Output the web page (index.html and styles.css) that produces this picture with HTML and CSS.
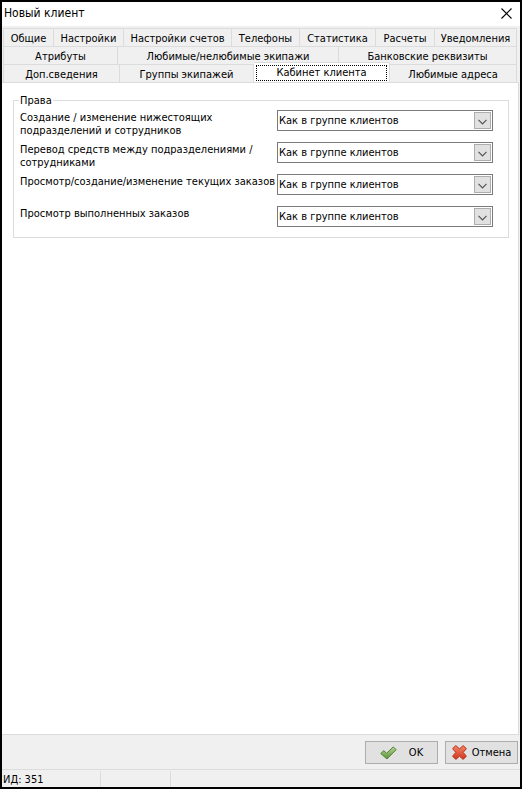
FILE: index.html
```html
<!DOCTYPE html>
<html lang="ru">
<head>
    <meta charset="UTF-8">
    <meta name="viewport" content="width=device-width, initial-scale=1.0">
    <title>Новый клиент</title>
    <link rel="stylesheet" href="styles.css">
</head>
<body>
    <div class="window">
        <header class="titlebar">
            <h1>Новый клиент</h1>
            <button type="button" class="close" aria-label="Закрыть">
                <svg width="11" height="11" viewBox="0 0 11 11"><path d="M.5 .5l10 10M10.5 .5l-10 10" fill="none" stroke="#000" stroke-width="1.1"/></svg>
            </button>
        </header>

        <nav class="tabs" role="tablist">
            <div class="tab-row row-1">
                <button type="button" role="tab">Общие</button>
                <button type="button" role="tab">Настройки</button>
                <button type="button" role="tab">Настройки счетов</button>
                <button type="button" role="tab">Телефоны</button>
                <button type="button" role="tab">Статистика</button>
                <button type="button" role="tab">Расчеты</button>
                <button type="button" role="tab">Уведомления</button>
            </div>
            <div class="tab-row row-2">
                <button type="button" role="tab">Атрибуты</button>
                <button type="button" role="tab">Любимые/нелюбимые экипажи</button>
                <button type="button" role="tab">Банковские реквизиты</button>
            </div>
            <div class="tab-row row-3">
                <button type="button" role="tab">Доп.сведения</button>
                <button type="button" role="tab">Группы экипажей</button>
                <button type="button" role="tab" class="active" aria-selected="true"><span>Кабинет клиента</span></button>
                <button type="button" role="tab">Любимые адреса</button>
            </div>
        </nav>

        <main class="page">
            <fieldset class="rights">
                <legend>Права</legend>
                <div class="field">
                    <label for="subdivisions">Создание / изменение нижестоящих подразделений и сотрудников</label>
                    <div class="combo">
                        <select id="subdivisions"><option>Как в группе клиентов</option></select>
                        <span class="arrow"><svg width="9" height="6" viewBox="0 0 9 6"><path d="M.5 .8l4 4 4-4" fill="none" stroke="#555" stroke-width="1.2"/></svg></span>
                    </div>
                </div>
                <div class="field">
                    <label for="transfer">Перевод средств между подразделениями / сотрудниками</label>
                    <div class="combo">
                        <select id="transfer"><option>Как в группе клиентов</option></select>
                        <span class="arrow"><svg width="9" height="6" viewBox="0 0 9 6"><path d="M.5 .8l4 4 4-4" fill="none" stroke="#555" stroke-width="1.2"/></svg></span>
                    </div>
                </div>
                <div class="field">
                    <label for="current">Просмотр/создание/изменение текущих заказов</label>
                    <div class="combo">
                        <select id="current"><option>Как в группе клиентов</option></select>
                        <span class="arrow"><svg width="9" height="6" viewBox="0 0 9 6"><path d="M.5 .8l4 4 4-4" fill="none" stroke="#555" stroke-width="1.2"/></svg></span>
                    </div>
                </div>
                <div class="field">
                    <label for="completed">Просмотр выполненных заказов</label>
                    <div class="combo">
                        <select id="completed"><option>Как в группе клиентов</option></select>
                        <span class="arrow"><svg width="9" height="6" viewBox="0 0 9 6"><path d="M.5 .8l4 4 4-4" fill="none" stroke="#555" stroke-width="1.2"/></svg></span>
                    </div>
                </div>
            </fieldset>
        </main>

        <div class="actions">
            <button type="button" class="btn btn-ok">
                <svg width="17" height="14" viewBox="0 0 17 14">
                    <defs><linearGradient id="green" x1="0" y1="0" x2="0" y2="1"><stop offset="0" stop-color="#b4d694"/><stop offset="1" stop-color="#5a9235"/></linearGradient></defs>
                    <path d="M.8 7.6L3.6 4.6 6.6 7.2 13.2 1 16.2 3.6 7 13z" fill="url(#green)" stroke="#55803a" stroke-width="1" stroke-linejoin="round"/>
                </svg>
                <span>OK</span>
            </button>
            <button type="button" class="btn btn-cancel">
                <svg width="15" height="15" viewBox="0 0 15 15">
                    <defs><linearGradient id="red" x1="0" y1="0" x2="0" y2="1"><stop offset="0" stop-color="#f0876a"/><stop offset="1" stop-color="#d2341a"/></linearGradient></defs>
                    <path d="M3.8 .6L7.5 3.8 11.2 .6 14.4 3.6 11.2 7.4 14.4 11.2 11.2 14.4 7.5 11.2 3.8 14.4 .6 11.2 3.8 7.4 .6 3.6z" fill="url(#red)" stroke="#b5321c" stroke-width="1" stroke-linejoin="round"/>
                </svg>
                <span>Отмена</span>
            </button>
        </div>

        <footer class="statusbar">
            <span>ИД: 351</span>
            <span></span>
            <span></span>
        </footer>
    </div>
</body>
</html>
```
FILE: styles.css
```css
:root {
    --face: #f0f0f0;
    --line: #dcdcdc;
    --button: #e1e1e1;
    --button-border: #adadad;
}

* {
    box-sizing: border-box;
}

body {
    margin: 0;
    font-family: Tahoma, 'DejaVu Sans Condensed', 'DejaVu Sans', sans-serif;
    font-size: 11px;
    line-height: 13px;
    color: #000;
}

button, select {
    font: inherit;
    color: inherit;
    margin: 0;
}

.window {
    display: flex;
    flex-direction: column;
    min-height: 100vh;
    border: 2px solid #000;
    background: var(--face);
}

.titlebar {
    display: flex;
    justify-content: space-between;
    align-items: center;
    height: 24px;
    padding: 0 8px 2px 2px;
    background: #fff;
}

.titlebar h1 {
    margin: 0;
    font-size: 12px;
    font-weight: normal;
}

.close {
    display: flex;
    padding: 0;
    border: none;
    background: none;
}

/* Tabs */
.tabs {
    padding: 2px 3px 0 1px;
}

.tab-row {
    display: grid;
    height: 18px;
    border-left: 1px solid var(--line);
}

.row-1 {
    grid-template-columns: 50fr 70fr 108fr 68fr 76fr 59fr 82fr;
}

.row-2 {
    grid-template-columns: 114fr 221fr 178fr;
}

.row-3 {
    grid-template-columns: 116fr 134fr 136fr 127fr;
}

.tab-row button {
    padding: 1px 0 0;
    border: 1px solid var(--line);
    border-width: 1px 1px 0 0;
    background: var(--face);
    white-space: nowrap;
}

.tab-row .active {
    height: 20px;
    margin-top: -2px;
    padding: 2px;
    border-bottom: none;
    background: #fff;
}

.active span {
    display: block;
    height: 16px;
    border: 1px dotted #000;
}

.page {
    flex: 1;
    padding: 11px 9px 12px 11px;
    margin-right: 1px;
    border: 1px solid var(--line);
    border-left: none;
    background: #fff;
}

/* Rights group */
.rights {
    margin: 0;
    padding: 3px 15px 5px 6px;
    border: 1px solid var(--line);
}

.rights legend {
    padding: 0 1px;
    margin-left: -1px;
}

.field {
    display: flex;
    justify-content: space-between;
    height: 26px;
    margin-bottom: 6px;
}

.field:last-child {
    margin-bottom: 0;
}

.field label {
    flex: 1;
    padding-top: 1px;
}

.combo {
    position: relative;
    width: 216px;
}

.combo select {
    width: 100%;
    height: 21px;
    padding: 0 20px 0 1px;
    border: 1px solid #7a7a7a;
    border-radius: 0;
    background: #fff;
    appearance: none;
}

.combo .arrow {
    position: absolute;
    top: 2px;
    right: 2px;
    display: flex;
    justify-content: center;
    align-items: center;
    width: 17px;
    height: 17px;
    padding-top: 2px;
    border: 1px solid var(--button-border);
    background: var(--button);
    pointer-events: none;
}

/* Bottom buttons */
.actions {
    display: flex;
    justify-content: flex-end;
    gap: 7px;
    padding: 6px 2px 5px;
}

.btn {
    display: flex;
    justify-content: center;
    align-items: center;
    gap: 5px;
    width: 73px;
    height: 23px;
    padding: 0;
    border: 1px solid var(--button-border);
    background: var(--button);
}

.btn-ok {
    gap: 12px;
}

.statusbar {
    display: flex;
    height: 18px;
    border-top: 1px solid var(--line);
}

.statusbar span {
    width: 70px;
    margin-top: 1px;
    padding: 2px 1px;
    border-right: 1px solid var(--line);
}

.statusbar span:first-child {
    width: 99px;
}

.statusbar span:last-child {
    flex: 1;
    border-right: none;
}
```
